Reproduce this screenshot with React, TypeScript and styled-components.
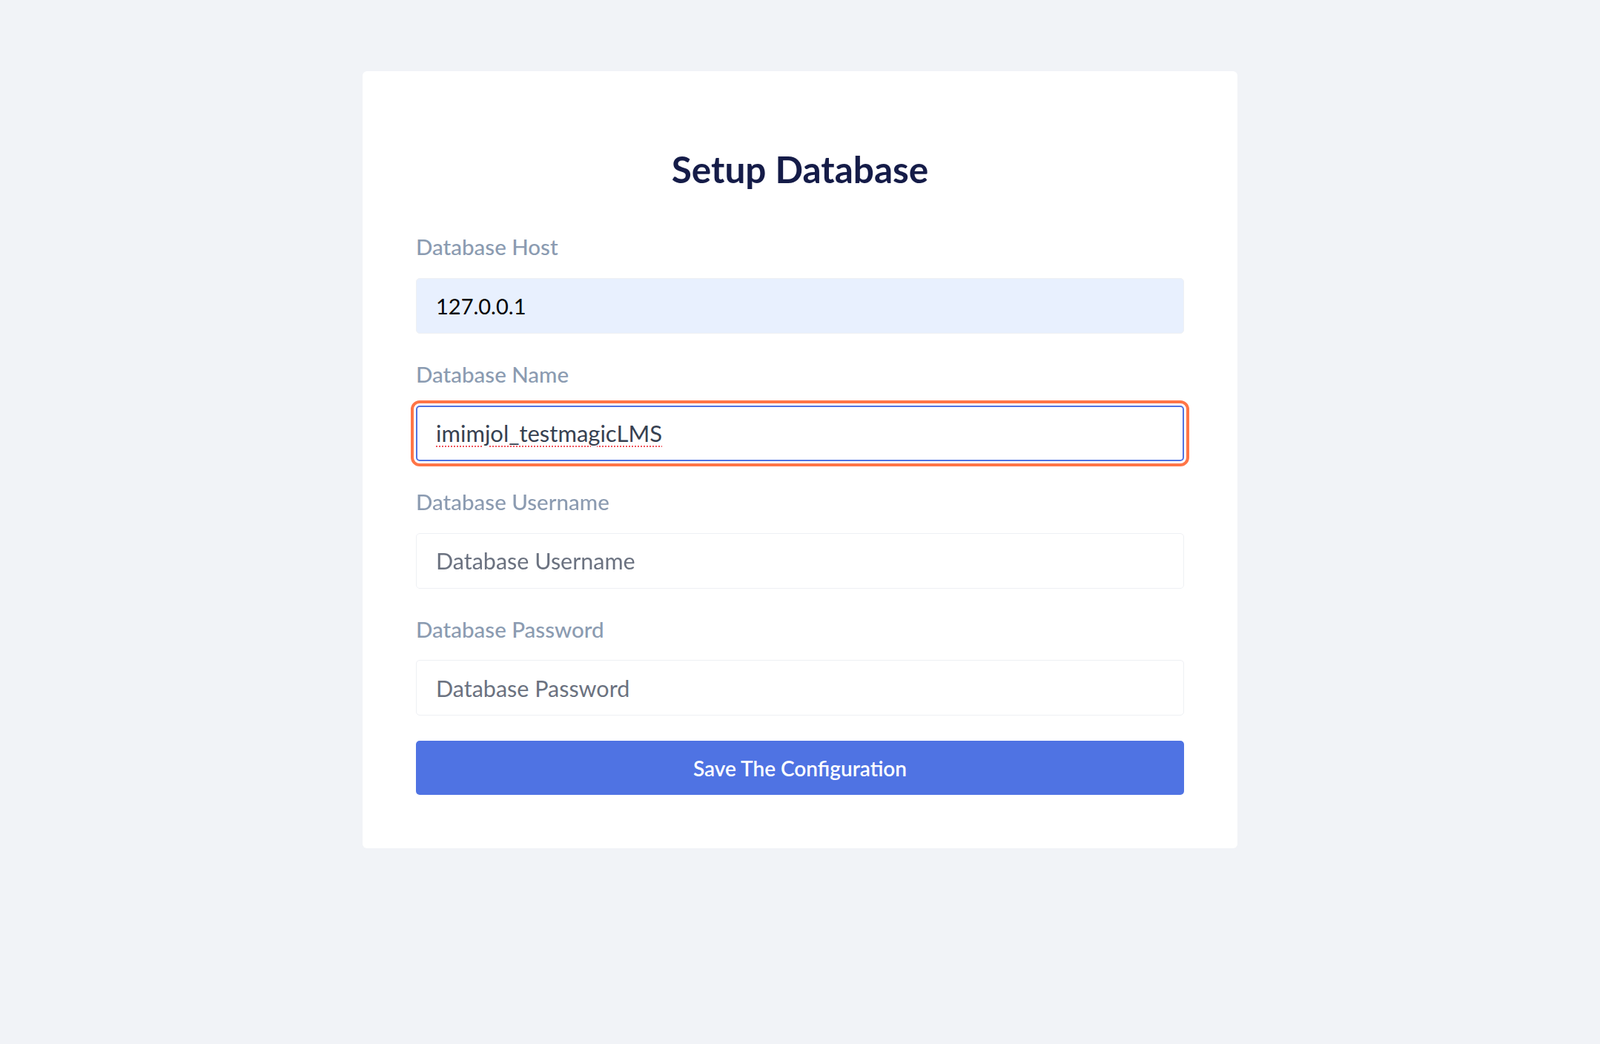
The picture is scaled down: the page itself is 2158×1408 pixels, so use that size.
import React, { useEffect, useRef } from 'react';
import styled, { createGlobalStyle, css } from 'styled-components';

const PAGE_BG = '#f1f3f7';
const TITLE_COLOR = '#151c48';
const LABEL_COLOR = '#8b9bb1';
const PRIMARY = '#4f73e3';
const FOCUS_RING = '#ff7547';

const GlobalStyle = createGlobalStyle`
  html, body {
    margin: 0;
    padding: 0;
    background: ${PAGE_BG};
  }
  body {
    font-family: Lato, "Open Sans", sans-serif;
  }
  * {
    box-sizing: border-box;
  }
`;

const fields = [
  { label: 'Database Host', value: '127.0.0.1', autofill: true },
  { label: 'Database Name', value: 'imimjol_testmagicLMS', active: true },
  { label: 'Database Username', placeholder: 'Database Username' },
  { label: 'Database Password', placeholder: 'Database Password', type: 'password' },
];

export default function App() {
  let nameRef = useRef<HTMLInputElement>(null);

  useEffect(() => {
    let input = nameRef.current;
    if (input) {
      input.focus();
      input.setSelectionRange(input.value.length, input.value.length);
    }
  }, []);

  return (
    <Page>
      <GlobalStyle />
      <Card>
        <Title>Setup Database</Title>
        <Form onSubmit={(e) => e.preventDefault()}>
          {fields.map((field) => (
            <Field key={field.label}>
              <Label>{field.label}</Label>
              <Input
                ref={field.active ? nameRef : undefined}
                type={field.type || 'text'}
                defaultValue={field.value}
                placeholder={field.placeholder}
                $autofill={field.autofill}
                $active={field.active}
                spellCheck={false}
              />
            </Field>
          ))}
          <SaveButton type="submit">Save The Configuration</SaveButton>
        </Form>
      </Card>
    </Page>
  );
}

const Page = styled.div`
  min-height: 100vh;
  display: flex;
  justify-content: center;
  align-items: flex-start;
  padding-top: 96px;
  background: ${PAGE_BG};
`;

const Card = styled.div`
  width: 1180px;
  padding: 72px;
  background: #ffffff;
  border-radius: 6px;
`;

const Title = styled.h1`
  margin: 31px 0 57px;
  text-align: center;
  font-size: 49.5px;
  line-height: 1.2;
  font-weight: 700;
  color: ${TITLE_COLOR};
`;

const Form = styled.form`
  display: flex;
  flex-direction: column;
`;

const Field = styled.div`
  display: flex;
  flex-direction: column;

  & + & {
    margin-top: 37.5px;
  }
`;

const Label = styled.label`
  margin-bottom: 24px;
  font-size: 29.5px;
  line-height: 1.2;
  font-weight: 500;
  color: ${LABEL_COLOR};
`;

const Input = styled.input<{ $autofill?: boolean; $active?: boolean }>`
  height: 75px;
  padding: 0 26px;
  border: 1px solid #eef0f4;
  border-radius: 5px;
  background: #ffffff;
  font-family: inherit;
  font-size: 30.5px;
  color: #374151;
  outline: none;

  &::placeholder {
    color: #6b7280;
  }

  ${(p) =>
    p.$autofill &&
    css`
      background: #e8f0fe;
      color: #000000;
      font-size: 29px;
    `}

  ${(p) =>
    p.$active &&
    css`
      border: 2px solid ${PRIMARY};
      padding: 0 25px;
      font-size: 31px;
      outline: 4px solid ${FOCUS_RING};
      outline-offset: 3px;
      text-decoration: underline dotted #f0545c;
      text-decoration-thickness: 2px;
      text-underline-offset: 5px;
      caret-color: #1f2937;

      &:focus {
        outline: 4px solid ${FOCUS_RING};
        outline-offset: 3px;
      }
    `}
`;

const SaveButton = styled.button`
  margin-top: 34px;
  height: 73px;
  border: none;
  border-radius: 5px;
  background: ${PRIMARY};
  color: #ffffff;
  font-family: inherit;
  font-size: 28px;
  font-weight: 600;
  cursor: pointer;
`;
